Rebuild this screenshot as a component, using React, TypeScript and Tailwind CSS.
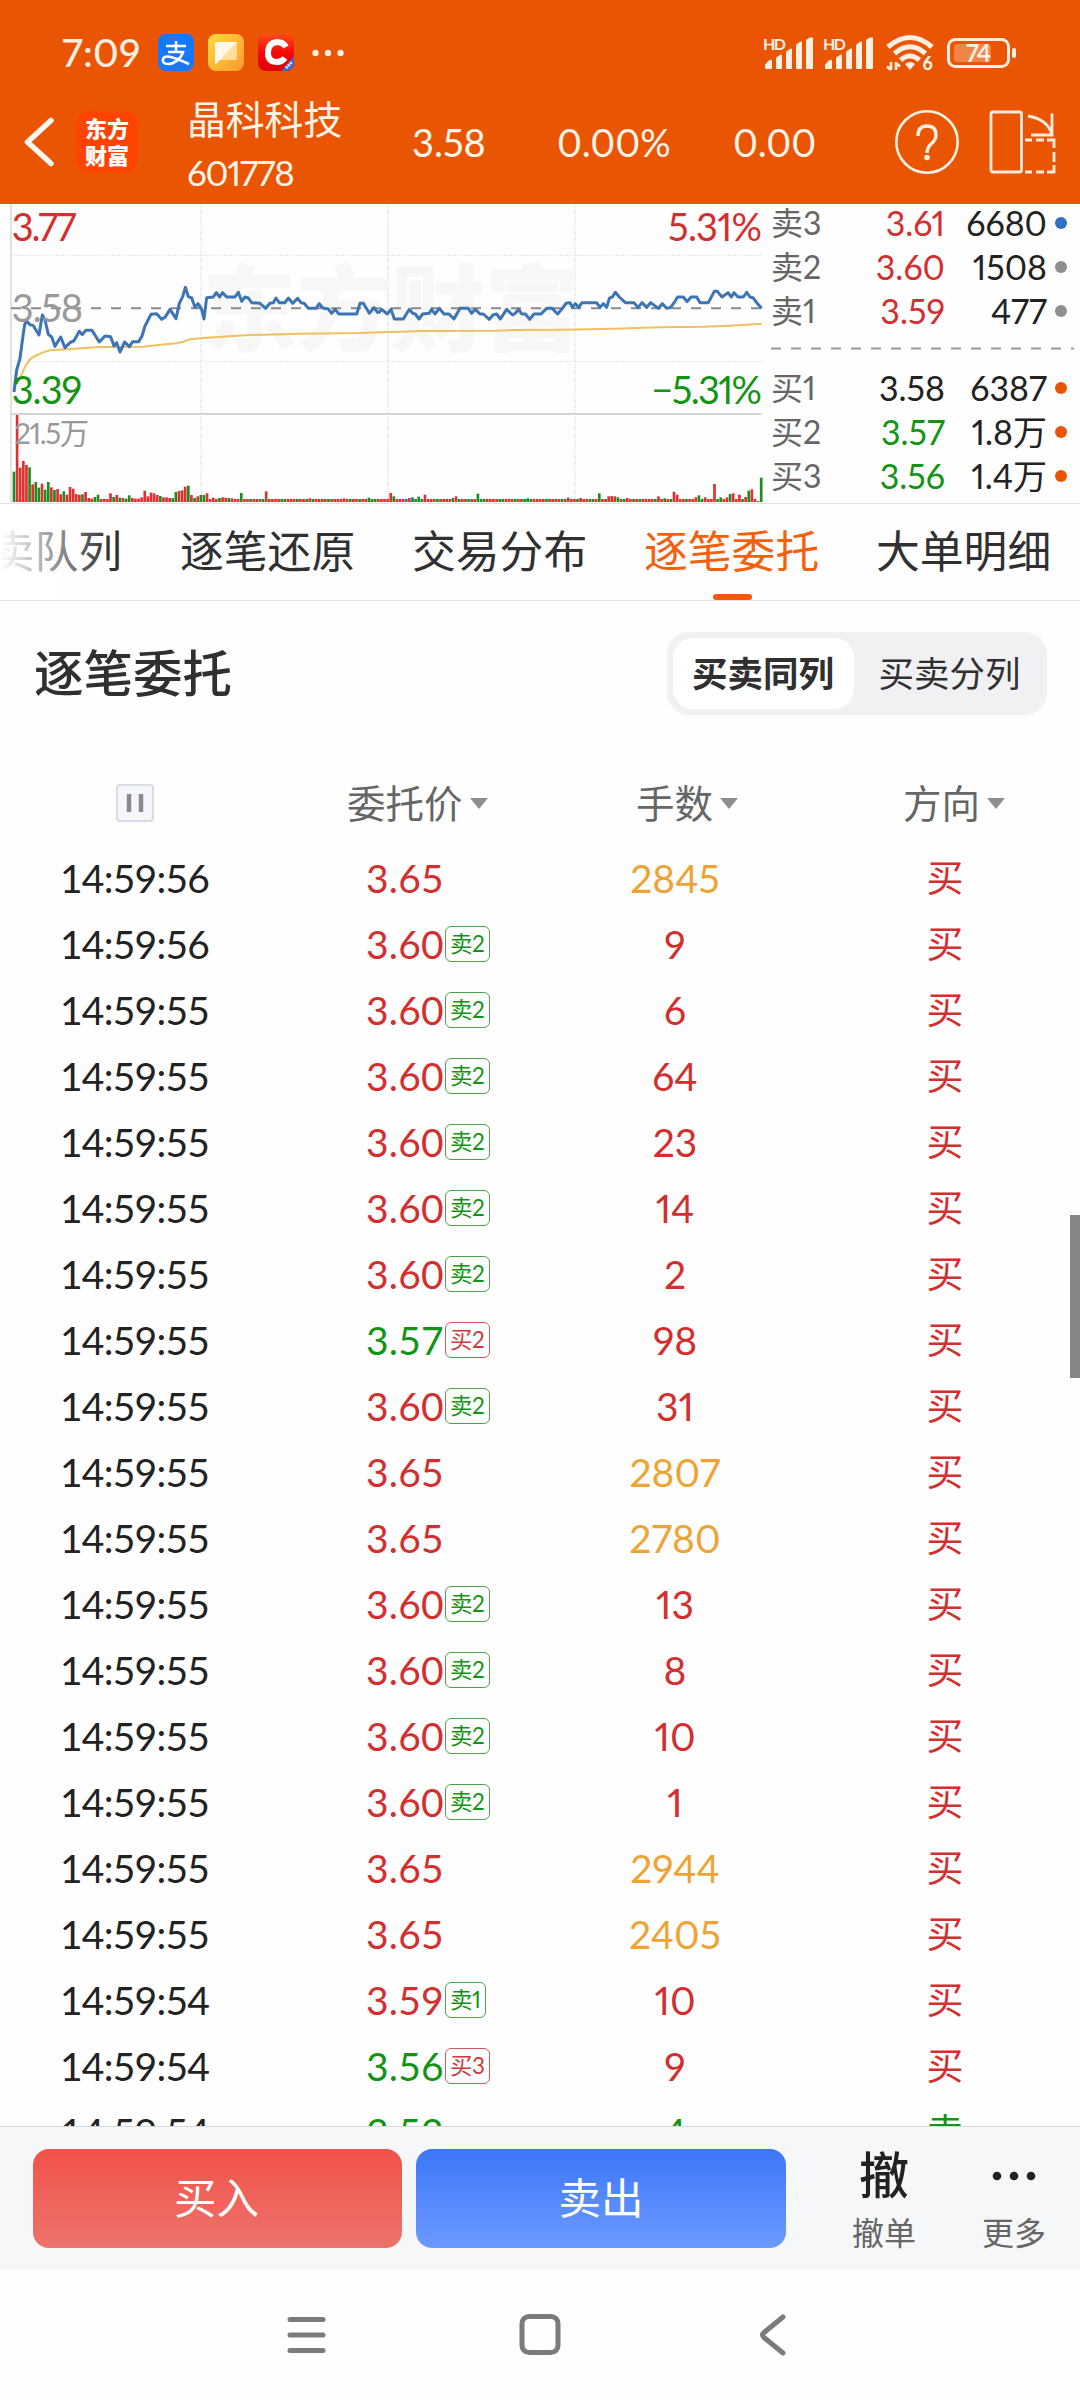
import React from 'react';

interface Order {
  time: string;
  price: string;
  level?: string;
  volume: string;
  side: '买' | '卖';
}

interface Quote {
  label: string;
  price: string;
  volume: string;
  priceColor: string;
  dotColor: string;
}

const orders: Order[] = [
  { time: '14:59:56', price: '3.65', volume: '2845', side: '买' },
  { time: '14:59:56', price: '3.60', level: '卖2', volume: '9', side: '买' },
  { time: '14:59:55', price: '3.60', level: '卖2', volume: '6', side: '买' },
  { time: '14:59:55', price: '3.60', level: '卖2', volume: '64', side: '买' },
  { time: '14:59:55', price: '3.60', level: '卖2', volume: '23', side: '买' },
  { time: '14:59:55', price: '3.60', level: '卖2', volume: '14', side: '买' },
  { time: '14:59:55', price: '3.60', level: '卖2', volume: '2', side: '买' },
  { time: '14:59:55', price: '3.57', level: '买2', volume: '98', side: '买' },
  { time: '14:59:55', price: '3.60', level: '卖2', volume: '31', side: '买' },
  { time: '14:59:55', price: '3.65', volume: '2807', side: '买' },
  { time: '14:59:55', price: '3.65', volume: '2780', side: '买' },
  { time: '14:59:55', price: '3.60', level: '卖2', volume: '13', side: '买' },
  { time: '14:59:55', price: '3.60', level: '卖2', volume: '8', side: '买' },
  { time: '14:59:55', price: '3.60', level: '卖2', volume: '10', side: '买' },
  { time: '14:59:55', price: '3.60', level: '卖2', volume: '1', side: '买' },
  { time: '14:59:55', price: '3.65', volume: '2944', side: '买' },
  { time: '14:59:55', price: '3.65', volume: '2405', side: '买' },
  { time: '14:59:54', price: '3.59', level: '卖1', volume: '10', side: '买' },
  { time: '14:59:54', price: '3.56', level: '买3', volume: '9', side: '买' },
  { time: '14:59:54', price: '3.52', volume: '4', side: '卖' },
];

const asks: Quote[] = [
  { label: '卖3', price: '3.61', volume: '6680', priceColor: 'text-[#d32f2f]', dotColor: 'bg-[#3070c0]' },
  { label: '卖2', price: '3.60', volume: '1508', priceColor: 'text-[#d32f2f]', dotColor: 'bg-[#8e8e93]' },
  { label: '卖1', price: '3.59', volume: '477', priceColor: 'text-[#d32f2f]', dotColor: 'bg-[#8e8e93]' },
];

const bids: Quote[] = [
  { label: '买1', price: '3.58', volume: '6387', priceColor: 'text-[#222222]', dotColor: 'bg-[#ea5504]' },
  { label: '买2', price: '3.57', volume: '1.8万', priceColor: 'text-[#149414]', dotColor: 'bg-[#ea5504]' },
  { label: '买3', price: '3.56', volume: '1.4万', priceColor: 'text-[#149414]', dotColor: 'bg-[#ea5504]' },
];

// Chart units are thirds of a pixel
const morningPrice =
  '42,576 50,510 60,475 70,400 75,370 82,365 90,374 100,377 117,405 127,345 135,360 145,403 155,411 165,439 182,411 195,443 210,428 222,422 238,394 247,404 257,391 276,391 298,426 315,408 332,410 342,438 350,428 360,456 374,426 388,440 398,425 416,425 426,408 435,378 453,343 470,341 485,358 495,352 510,328 528,356 538,310 548,290 556,262 565,290 575,294 585,322 594,311 604,325 612,357 620,293 640,291 649,278 659,291 668,278 680,291 705,291 715,277 725,304 735,291 745,294 755,308 780,310 797,325 810,310 820,308 828,294 838,308 855,308 865,294 878,310 893,295 903,308 912,310 925,325 948,325 958,311 968,324 985,327 995,340 1006,328 1016,342 1070,342 1080,310 1090,310 1108,340 1122,323 1135,340';
const afternoonPrice =
  '-5,340 5,328 22,342 33,328 43,357 70,357 88,328 98,340 106,342 117,357 128,342 148,340 155,328 165,342 178,325 192,342 207,342 222,357 240,325 265,325 275,340 286,328 300,342 310,342 328,358 340,344 350,342 361,357 380,328 398,345 406,340 416,328 425,342 436,342 449,358 462,342 483,342 500,325 516,325 533,342 545,328 558,310 570,308 577,322 586,311 596,322 606,308 650,308 660,322 670,311 680,322 688,295 698,290 706,277 718,291 736,308 762,308 774,323 786,308 800,322 812,308 835,325 847,311 860,325 872,322 885,304 893,291 910,291 921,305 933,291 950,291 960,308 985,308 1003,274 1012,274 1026,291 1044,278 1054,291 1062,278 1074,291 1090,291 1100,277 1110,291 1119,293 1130,308 1145,325';
const averagePrice =
  '42,560 60,535 75,500 90,478 105,468 130,457 150,451 200,448 300,441 430,440 480,434 530,430 550,425 570,418 620,413 700,408 750,405 900,401 1080,399 1140,397 1200,395 1260,393 1490,392 1540,390 1690,389 1840,386 1980,382 2110,380 2190,377 2260,373 2285,372';

const openingVolume =
  'g91 r261 r103 r123 r111 g104 r53 g60 g43 r55 g37 g60 r44 g36 r39 r23 g32 r22 r45 r40 r24 r22 g23 r30 r12 r10 g15 g22 r9 r9 r9 r26 g15 r21 g13 r12 g10 g20 r12 r10 r10 r14 r34 r17 r28 r26 r21 g18 r14 r14 r12 g12 g30 r33 r35 r46 g49 r21 g12 r17 g21 g21 r26 r9 r13 r9 g12 r14 r13 g12 r11 r9 r9 g27'.split(' ');

const laterVolume: Record<number, string> = {
  81: 'r32', 95: 'r11', 106: 'r11', 114: 'g13', 121: 'r27', 122: 'g17', 127: 'r12', 128: 'g14', 130: 'g16', 132: 'r22',
  141: 'g12', 142: 'r17', 149: 'g25', 165: 'g11', 178: 'r13', 182: 'r12', 188: 'g26', 191: 'r17', 192: 'r18', 193: 'r17',
  194: 'g14', 197: 'r12', 207: 'r17', 209: 'g11', 212: 'r31', 213: 'r22', 219: 'r14', 220: 'g20', 222: 'r14', 225: 'r54',
  227: 'g14', 229: 'r14', 230: 'g24', 231: 'r26', 233: 'r22', 235: 'r15', 236: 'g34', 237: 'r38', 239: 'g3', 240: 'g73',
};

const volumeBars = Array.from({ length: 241 }, (_, i) => {
  const bar = openingVolume[i] ?? laterVolume[i] ?? (i % 5 === 1 || i % 7 === 3 ? 'g9' : 'r9');
  return { x: 38 + i * 9.34, height: Number(bar.slice(1)), color: bar[0] === 'r' ? '#e03030' : '#208c20' };
});

const SignalIcon: React.FC = () => (
  <svg className="h-[36px] w-[52px] overflow-visible" viewBox="0 0 52 36" fill="#ffeee2">
    <text x="0" y="15" fontSize="16" fontWeight="700" textLength="23" fontFamily="Lato, sans-serif">HD</text>
    <path d="M2 33v-3q4-6 7-5v8q0 1-1 1H3q-1 0-1-1ZM13 23q5-5 6-3v13q0 1-1 1h-4q-1 0-1-1ZM23 17q5-5 6-3v19q0 1-1 1h-4q-1 0-1-1ZM33 10q5-5 6-3v26q0 1-1 1h-4q-1 0-1-1ZM43 5q5-4 7-2v30q0 1-1 1h-5q-1 0-1-1Z" />
  </svg>
);

const StatusBar: React.FC = () => (
  <div className="flex h-[104px] items-center pt-px pr-[62px] pl-[62px] text-[#ffeee2]">
    <span className="mb-[2px] w-[96px] text-[39px] leading-[40px] font-medium tracking-[0.2px]">7:09</span>
    <svg className="mr-[14px] h-[37px] w-9" viewBox="0 0 36 37">
      <rect width="36" height="37" rx="8" fill="#1677ff" />
      <path d="M8 12h20M18 7v10M10 18h15c-2 7-9 12-15 12-4 0-6-2-5-5 2-5 10-2 26 5" fill="none" stroke="#fff" strokeWidth="2.6" />
    </svg>
    <svg className="mr-[14px] h-[37px] w-9" viewBox="0 0 36 37">
      <defs>
        <linearGradient id="note" x1="0" y1="0" x2="1" y2="1">
          <stop stopColor="#ffd93f" />
          <stop offset="1" stopColor="#ff9a2c" />
        </linearGradient>
      </defs>
      <rect width="36" height="37" rx="8" fill="url(#note)" />
      <rect x="7" y="8" width="22" height="18" rx="2" fill="#ffdf9a" />
      <path d="M7 10q0-2 2-2h20L8 30q-1 1-1-1Z" fill="#fff8ea" />
    </svg>
    <svg className="mr-[18px] h-[37px] w-9" viewBox="0 0 36 37">
      <defs>
        <linearGradient id="csdn" x1="0" y1="0" x2="0" y2="1">
          <stop stopColor="#ff4b1c" />
          <stop offset="0.5" stopColor="#f50808" />
          <stop offset="1" stopColor="#e00000" />
        </linearGradient>
        <clipPath id="csdnClip"><rect width="36" height="37" rx="8" /></clipPath>
      </defs>
      <g clipPath="url(#csdnClip)">
        <rect width="36" height="37" fill="url(#csdn)" />
        <path d="M36 22v15H23Z" fill="#3f68c8" />
        <path d="M28 34l6-6" stroke="#dbe5ff" strokeWidth="3" strokeDasharray="2 1" />
        <path d="M28 13q-3-5-9-5-9 1-9 11 0 9 9 9 5 0 8-4" fill="none" stroke="#fff" strokeWidth="6" />
      </g>
    </svg>
    <svg className="h-2 w-8" viewBox="0 0 32 8" fill="#ffeee2">
      <circle cx="3.5" cy="4" r="3.2" />
      <circle cx="16" cy="4" r="3.2" />
      <circle cx="28.5" cy="4" r="3.2" />
    </svg>
    <div className="ml-auto flex items-center">
      <SignalIcon />
      <span className="w-2" />
      <SignalIcon />
      <svg className="ml-[11px] h-9 w-[48px] overflow-visible" viewBox="0 0 48 36">
        <g fill="none" stroke="#ffeee2" strokeWidth="5">
          <path d="M2 12Q24-7 46 12" />
          <path d="M8.500 18.500Q24 5 39.500 18.500" />
          <path d="M14.500 25Q24 17 33.500 25" />
        </g>
        <path d="M19 29q5-4 10 0l-5 6Z" fill="#ffeee2" />
        <path d="M5 27v8M5 35l-4-3.500M10 27v8M10 28l4 3.500" stroke="#ffeee2" strokeWidth="2.600" />
        <text x="36.500" y="35" fontSize="18" fontWeight="900" fill="#ffeee2" fontFamily="Lato, sans-serif">6</text>
      </svg>
      <svg className="ml-[13px] h-[32px] w-[71px] overflow-visible" viewBox="0 0 71 32">
        <rect x="1.500" y="2.500" width="60" height="27" rx="7" fill="none" stroke="#ffeee2" strokeWidth="3" />
        <rect x="7" y="7" width="37" height="18" rx="3" fill="#f28347" />
        <rect x="65" y="11" width="4" height="10" rx="2" fill="#ffeee2" />
        <text x="19" y="24.500" fontSize="24" fontWeight="700" textLength="25" fill="#ffeee2" fontFamily="Lato, sans-serif">74</text>
      </svg>
    </div>
  </div>
);

const StockHeader: React.FC = () => (
  <div className="flex h-[100px] items-start text-[#fff6ea]">
    <svg className="mt-[12px] ml-[23px] h-[52px] w-[34px]" viewBox="0 0 34 52" fill="none" stroke="#fff6f0" strokeWidth="5.500" strokeLinecap="round" strokeLinejoin="round">
      <path d="M28 4.500 4.500 26 28 47.500" />
    </svg>
    <div className="mt-[7px] ml-[19px] flex h-[62px] w-[62px] flex-col items-center justify-center rounded-[13px] bg-[#ff4300] text-[22px] leading-[27px] font-black text-white">
      <span>东方</span>
      <span>财富</span>
    </div>
    <div className="-mt-[8px] ml-[49px] w-[225px]">
      <div className="text-[38.8px] leading-[46px]">晶科科技</div>
      <div className="mt-[9px] text-[35px] leading-[42px] tracking-[-1.3px]">601778</div>
    </div>
    <span className="mt-[17px] w-[145px] text-[38px] leading-[42px]">3.58</span>
    <span className="mt-[17px] w-[176px] text-[38px] leading-[42px]">0.00%</span>
    <span className="mt-[17px] text-[38px] leading-[42px]">0.00</span>
    <svg className="mt-[5px] ml-auto h-[66px] w-[66px]" viewBox="0 0 66 66" fill="none" stroke="#fff0e2">
      <circle cx="33" cy="33" r="30.700" strokeWidth="2.600" />
      <path d="M24 27q0-10 9-10t9 9q0 5-5 9-4 4-4 9" strokeWidth="3.400" />
      <circle cx="33" cy="48.500" r="2.800" fill="#fff0e2" stroke="none" />
    </svg>
    <svg className="mt-[6px] mr-[23px] ml-[29px] h-[64px] w-[68px]" viewBox="0 0 68 64" fill="none" stroke="#ffeadb" strokeWidth="2.800">
      <rect x="2" y="2" width="30.500" height="60" rx="2" />
      <path d="M39 6Q58 9 63 24M63 3.500V25H42" />
      <path d="M36 30h7M47 30h8M58 30h7v8M65 42v10M65 55v7h-7M55 62h-8M43 62h-7" />
    </svg>
  </div>
);

const PriceChart: React.FC = () => (
  <svg className="h-[299px] w-[765px] shrink-0" viewBox="0 12 2295 897" fontFamily="Lato, 'Noto Sans CJK SC', sans-serif">
    <text x="606" y="432" fontSize="284" fontWeight="900" textLength="1132" fill="#f7f7f7">东方财富</text>
    <g stroke="#d8d8d8" strokeWidth="3" fill="none" strokeDasharray="3 4">
      <path d="M35 166H2285M35 484H2285" />
      <path d="M603 12V906M1164 12V906M1725 12V906" strokeWidth="4" />
    </g>
    <path d="M33 12V906" stroke="#e2e2e2" strokeWidth="6" />
    <path d="M33 642H2285" stroke="#d4d4d4" strokeWidth="6" />
    <path d="M33 325H2285" stroke="#8a8a8a" strokeWidth="6" strokeDasharray="30 30" />
    {volumeBars.map((bar, i) => (
      <rect key={i} x={bar.x} y={906 - bar.height} width="8" height={bar.height} fill={bar.color} />
    ))}
    <polyline points={averagePrice} fill="none" stroke="#f0c060" strokeWidth="6" />
    <g fill="none" stroke="#3d74b4" strokeWidth="9" strokeLinejoin="round">
      <polyline points={morningPrice} />
      <polyline points={afternoonPrice} transform="translate(1140)" />
    </g>
    <g fontSize="114">
      <text x="35" y="122" textLength="194" fill="#d32f2f">3.77</text>
      <text x="35" y="367" textLength="214" fill="#999999">3.58</text>
      <text x="35" y="613" textLength="212" fill="#149414">3.39</text>
      <text x="2004" y="122" textLength="282" fill="#d32f2f">5.31%</text>
      <text x="1954" y="613" textLength="332" fill="#149414">−5.31%</text>
    </g>
    <text x="43" y="731" fontSize="88" textLength="224" fill="#999999">21.5万</text>
  </svg>
);

const QuoteRow: React.FC<{ quote: Quote }> = ({ quote }) => (
  <div className="flex h-[44px] items-center text-[34px] leading-[36px]">
    <span className="w-[70px] text-[32px] text-[#666666]">{quote.label}</span>
    <span className={`w-[104px] text-right ${quote.priceColor}`}>{quote.price}</span>
    <span className="w-[102px] text-right text-[#222222]">{quote.volume}</span>
    <span className={`ml-2 h-3 w-3 rounded-full ${quote.dotColor}`} />
  </div>
);

const OrderBook: React.FC = () => (
  <div className="-mt-[3px] flex-1 pl-[6px]">
    {asks.map(quote => (
      <QuoteRow key={quote.label} quote={quote} />
    ))}
    <svg className="h-[33px] w-[303px]" viewBox="0 0 303 33">
      <path d="M0 15.500H303" stroke="#999999" strokeWidth="2" strokeDasharray="10 10" />
    </svg>
    {bids.map(quote => (
      <QuoteRow key={quote.label} quote={quote} />
    ))}
  </div>
);

const Tabs: React.FC = () => (
  <div className="relative flex h-[98px] items-center overflow-hidden border-y border-[#e2e2e4] pb-[3px] text-[43.8px] leading-[60px] text-[#303030]">
    <div className="flex w-[122px] shrink-0 justify-end">
      <span className="shrink-0">卖队列</span>
    </div>
    <span className="ml-[58px] w-[232px] shrink-0">逐笔还原</span>
    <span className="w-[232px] shrink-0">交易分布</span>
    <span className="w-[232px] shrink-0 text-[#f5600f]">逐笔委托</span>
    <span className="shrink-0">大单明细</span>
    <div className="absolute top-0 left-0 h-full w-[110px] bg-gradient-to-r from-white to-transparent" />
    <div className="absolute bottom-0 left-[713px] h-[6px] w-[39px] rounded-[3px] bg-[#fb560a]" />
  </div>
);

const SortArrow: React.FC = () => (
  <svg className="ml-[7px] h-[11px] w-[18px]" viewBox="0 0 18 11">
    <path d="M0 0h18L9 11Z" fill="#8e8e93" />
  </svg>
);

const OrderRow: React.FC<{ order: Order }> = ({ order }) => {
  const isUp = Number(order.price) > 3.58;
  const isLarge = Number(order.volume) > 1000;
  const sideColor = order.side === '买' ? 'text-[#d32f2f]' : 'text-[#149414]';
  const volumeColor = isLarge ? 'text-[#eea435]' : sideColor;

  return (
    <div className="flex h-[66px] shrink-0 items-center text-[39px] leading-[46px]">
      <span className="w-[306px] pl-[60px] tracking-[-0.75px] text-[#222222] tabular-nums">{order.time}</span>
      <div className={`flex w-[289px] items-center pl-[60px] ${isUp ? 'text-[#d32f2f]' : 'text-[#149414]'}`}>
        <span className="tracking-[0.2px] tabular-nums">{order.price}</span>
        {order.level && (
          <span
            className={`mb-px ml-px flex h-9 items-center rounded-[6px] border px-1 text-[22.5px] tracking-[-0.3px] ${
              order.level[0] === '卖' ? 'border-[#4da04d] text-[#149414]' : 'border-[#cc5a5a] text-[#cc3a3a]'
            }`}
          >
            {order.level}
          </span>
        )}
      </div>
      <span className={`w-[160px] text-center ${volumeColor}`}>{order.volume}</span>
      <span className={`ml-[150px] w-20 text-center text-[37px] ${sideColor}`}>{order.side}</span>
    </div>
  );
};

const OrderTable: React.FC = () => (
  <div className="relative flex h-[1525px] flex-col overflow-hidden bg-[#fefefe]">
    <div className="flex h-[145px] shrink-0 items-center justify-between pr-[33px] pl-[34px]">
      <h1 className="mb-[2px] text-[49.5px] leading-[60px] font-medium text-[#303030]">逐笔委托</h1>
      <div className="flex h-[83px] w-[380px] items-center rounded-[22px] bg-[#f1f1f4] p-[6px] text-[35.5px] leading-[50px] text-[#303030]">
        <span className="flex h-[71px] w-[181px] items-center justify-center rounded-[20px] bg-white pr-px font-bold">买卖同列</span>
        <span className="flex-1 pl-1 text-center">买卖分列</span>
      </div>
    </div>
    <div className="mt-[33px] flex h-[48px] shrink-0 items-center text-[38.5px] leading-[48px] text-[#666666]">
      <div className="w-[347px] pl-[116px]">
        <svg className="h-[38px] w-[38px]" viewBox="0 0 38 38">
          <rect x="1" y="1" width="36" height="36" rx="3" fill="#f4f6fa" stroke="#d8dce4" strokeWidth="2" />
          <path d="M13 10v18M25 10v18" stroke="#8a8a8e" strokeWidth="4.500" />
        </svg>
      </div>
      <div className="flex w-[289px] items-center">委托价<SortArrow /></div>
      <div className="flex w-[267px] items-center">手数<SortArrow /></div>
      <div className="flex items-center">方向<SortArrow /></div>
    </div>
    <div className="mt-[18px] shrink-0">
      {orders.map((order, i) => (
        <OrderRow key={i} order={order} />
      ))}
    </div>
    <div className="absolute top-[614px] right-0 h-[163px] w-[10px] bg-[#868686]" />
  </div>
);

const ActionBar: React.FC = () => (
  <div className="flex h-[144px] items-center border-t border-[#d4d7dc] bg-[#f6f7f9] pl-[33px]">
    <button className="h-[99px] w-[369px] rounded-[16px] bg-gradient-to-b from-[#f2524a] to-[#ec726b] pr-[2px] pb-[2px] text-[42.5px] text-white">买入</button>
    <button className="ml-[14px] h-[99px] w-[370px] rounded-[16px] bg-gradient-to-b from-[#3c77fa] to-[#6c99ff] pb-[2px] text-[42.5px] text-white">卖出</button>
    <div className="ml-[48px] flex w-[100px] flex-col items-center">
      <span className="mt-[3px] text-[50px] leading-[60px] font-medium text-[#222222]">撤</span>
      <span className="mt-[6px] text-[32px] leading-[44px] text-[#666666]">撤单</span>
    </div>
    <div className="ml-[30px] flex w-[100px] flex-col items-center">
      <svg className="mt-[3px] h-[60px] w-[44px]" viewBox="0 0 44 60" fill="#222222">
        <circle cx="5" cy="31" r="4.300" />
        <circle cx="22" cy="31" r="4.300" />
        <circle cx="39" cy="31" r="4.300" />
      </svg>
      <span className="mt-[6px] text-[32px] leading-[44px] text-[#666666]">更多</span>
    </div>
  </div>
);

const SystemNav: React.FC = () => (
  <div className="flex h-[130px] justify-center bg-[#fefefe] pt-[43px]">
    <svg className="mr-px h-[44px] w-[506px]" viewBox="0 0 506 44" fill="none" stroke="#7b7b7b" strokeWidth="5" strokeLinecap="round" strokeLinejoin="round">
      <path d="M3 6.500h33M3 22h33M3 37.500h33" />
      <rect x="235" y="3.500" width="36" height="36" rx="7" />
      <path d="M496 4 477 19.500q-3 2.500 0 5L496 40" />
    </svg>
  </div>
);

const App: React.FC = () => (
  <div className="h-[2400px] w-[1080px] overflow-hidden bg-[#fefefe] font-[Lato,'Noto_Sans_CJK_SC',sans-serif] proportional-nums">
    <header className="h-[204px] bg-[#ea5504]">
      <StatusBar />
      <StockHeader />
    </header>
    <div className="flex h-[299px] overflow-hidden">
      <PriceChart />
      <OrderBook />
    </div>
    <Tabs />
    <OrderTable />
    <ActionBar />
    <SystemNav />
  </div>
);

export default App;
